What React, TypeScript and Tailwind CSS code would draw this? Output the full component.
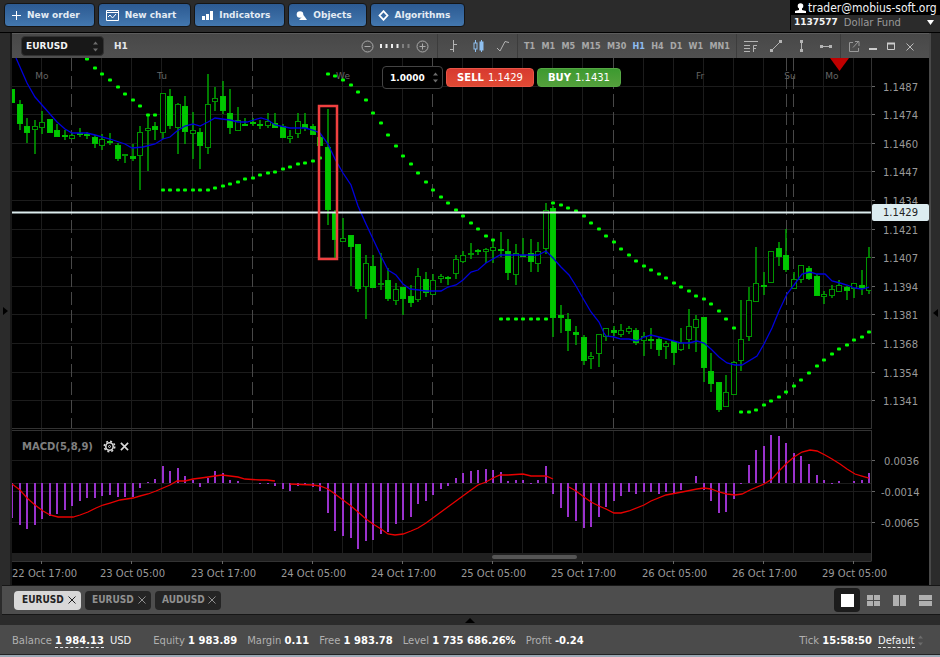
import type { ReactNode } from "react";

// [high, body top, body bottom, low, filled]
type Candle = [number, number, number, number, 0 | 1];

const CANDLES: Candle[] = [
  [89, 89, 103, 103, 1], [100, 104, 124, 130, 1], [118, 126, 133, 143, 1], [120, 126, 130, 154, 0], [111, 122, 128, 134, 0],
  [119, 119, 133, 133, 1], [124, 130, 137, 137, 1], [130, 135, 137, 140, 1], [133, 135, 139, 139, 0], [128, 133, 134, 137, 1],
  [132, 134, 136, 139, 1], [135, 137, 144, 148, 1], [134, 139, 146, 150, 0], [133, 141, 143, 145, 1], [143, 145, 159, 161, 1],
  [154, 154, 156, 163, 0], [144, 156, 159, 161, 1], [126, 132, 156, 190, 0], [115, 128, 131, 171, 0], [122, 126, 130, 140, 1],
  [93, 93, 133, 139, 0], [89, 96, 126, 129, 1], [103, 104, 128, 154, 0], [96, 106, 132, 144, 1], [112, 130, 134, 159, 0],
  [128, 132, 146, 169, 1], [74, 104, 148, 154, 0], [87, 98, 102, 111, 0], [81, 96, 111, 114, 1], [89, 113, 128, 134, 1],
  [107, 120, 131, 131, 0], [118, 124, 126, 126, 1], [118, 122, 124, 126, 1], [120, 124, 126, 129, 1], [113, 121, 126, 128, 0],
  [113, 123, 128, 128, 1], [124, 126, 138, 138, 1], [130, 136, 139, 143, 0], [113, 121, 134, 138, 0], [113, 124, 128, 131, 1],
  [124, 126, 135, 135, 1], [133, 137, 146, 146, 1], [109, 147, 210, 225, 1], [210, 212, 240, 259, 1], [218, 238, 242, 242, 0],
  [235, 235, 247, 286, 1], [244, 244, 289, 292, 1], [255, 263, 287, 319, 0], [255, 266, 288, 288, 1], [253, 283, 285, 290, 0],
  [268, 280, 299, 301, 1], [283, 289, 301, 305, 0], [287, 287, 299, 315, 1], [285, 296, 303, 307, 1], [268, 276, 300, 302, 0],
  [272, 279, 293, 297, 1], [274, 280, 295, 295, 0], [274, 276, 279, 283, 0], [276, 277, 279, 285, 1], [255, 259, 274, 279, 0],
  [251, 255, 262, 263, 0], [243, 253, 255, 259, 0], [249, 250, 252, 255, 1], [248, 249, 252, 263, 0], [241, 247, 251, 263, 0],
  [232, 249, 250, 257, 1], [239, 251, 273, 280, 1], [244, 253, 275, 285, 0], [238, 255, 257, 257, 1], [239, 253, 262, 272, 1],
  [242, 251, 264, 272, 0], [203, 210, 249, 254, 0], [206, 208, 318, 337, 1], [305, 315, 318, 333, 1], [313, 319, 331, 351, 1],
  [326, 332, 335, 345, 1], [335, 337, 361, 365, 1], [352, 356, 359, 369, 0], [334, 334, 354, 367, 0], [328, 328, 337, 341, 0],
  [326, 330, 333, 336, 1], [324, 330, 335, 337, 0], [326, 328, 332, 334, 0], [328, 330, 343, 345, 1], [332, 336, 341, 356, 0],
  [328, 339, 341, 349, 1], [337, 339, 350, 356, 1], [341, 343, 347, 359, 0], [341, 341, 353, 365, 1], [328, 343, 350, 351, 0],
  [309, 326, 340, 349, 0], [315, 319, 328, 352, 0], [317, 317, 368, 382, 1], [353, 371, 384, 392, 1], [382, 382, 410, 412, 1],
  [375, 392, 407, 407, 0], [361, 362, 395, 395, 0], [300, 339, 361, 371, 0], [287, 300, 337, 341, 0], [247, 283, 302, 302, 0],
  [272, 285, 287, 295, 1], [251, 251, 283, 283, 0], [242, 248, 257, 266, 1], [229, 255, 270, 272, 1], [272, 279, 289, 289, 0],
  [265, 265, 280, 283, 0], [266, 268, 279, 280, 1], [274, 276, 296, 296, 1], [291, 294, 297, 304, 0], [285, 289, 296, 298, 0],
  [280, 285, 292, 292, 0], [286, 287, 291, 300, 1], [283, 283, 289, 298, 0], [270, 285, 288, 295, 1], [247, 257, 291, 294, 0],
];

const SAR: { from: number; ys: number[] }[] = [
  { from: 10, ys: [59, 68, 74, 80, 87, 94, 100, 106, 115, 115] },
  { from: 20, ys: [190, 190, 190, 190, 190, 190, 190, 188, 186, 184, 182, 179, 178, 175, 173, 172, 169, 167, 164, 163, 161, 158] },
  { from: 42, ys: [74, 76, 80, 85, 92, 100, 113, 123, 135, 146, 156, 164, 173, 182, 190, 197, 203, 210, 216, 223, 229, 236, 240] },
  { from: 65, ys: [319, 319, 319, 319, 319, 319, 319] },
  { from: 72, ys: [203, 205, 208, 211, 216, 223, 229, 236, 242, 249, 255, 261, 266, 270, 274, 278, 283, 287, 291, 296, 299, 304, 311, 319, 328] },
  { from: 97, ys: [412, 412, 410, 405, 401, 397, 392, 386, 380, 373, 366, 360, 354, 349, 345, 340, 337, 332] },
];

const MACD = [
  518, 525, 529, 525, 519, 516, 514, 510, 506, 501, 498, 498, 496, 495, 497, 497, 497, 488, 482, 479, 466, 471, 468, 476, 480,
  487, 478, 471, 473, 480, 481, 483, 483, 484, 484, 486, 489, 491, 486, 485, 487, 491, 513, 531, 536, 538, 549, 541, 540, 534,
  532, 524, 520, 517, 504, 501, 495, 489, 486, 478, 473, 471, 470, 469, 470, 472, 481, 480, 480, 484, 480, 466, 494, 508, 517,
  521, 528, 527, 517, 507, 501, 496, 492, 494, 492, 492, 494, 492, 494, 490, 483, 476, 490, 501, 513, 512, 499, 484, 465, 450,
  446, 435, 436, 443, 453, 456, 464, 475, 480, 484, 481, 483, 481, 480, 473,
];

const MA_LINE =
  "16,58 20,67 27,83 35,97 42,105 57,122 65,129 72,133 87,133 95,135 110,139 125,144 132,148 143,147 155,144 163,139 170,137 177,131 185,126 193,124 200,126 208,122 215,118 222,119 230,120 238,122 247,122 254,120 261,118 268,120 275,125 290,128 305,128 313,130 320,133 328,144 335,159 343,173 351,185 358,206 366,224 373,239 381,256 388,270 396,275 403,284 410,289 419,290 426,291 441,291 448,287 456,285 463,280 471,272 478,270 486,263 500,255 538,255 546,251 553,258 561,267 569,275 576,286 584,300 591,312 599,322 604,333 606,336 614,337 621,339 629,339 637,341 644,337 651,335 659,337 674,341 681,343 689,343 697,341 704,343 711,349 719,357 727,363 735,365 742,365 757,356 764,344 772,328 779,311 787,294 794,285 802,274 810,272 817,274 825,274 832,281 840,283 847,285 855,288 862,289 869,287";

const SIGNAL_LINES = [
  "12,484 20,490 27,498 35,505 43,511 50,515 58,517 65,517 73,517 80,515 88,512 96,508 103,505 110,503 120,500 133,498 140,496 148,494 156,491 163,488 170,485 177,481 185,481 193,479 201,478 208,477 215,476 222,475 230,476 238,477 245,479 260,480 267,480 275,481",
  "290,484 313,485 320,486 328,489 335,494 343,500 351,506 358,512 366,519 373,524 381,529 388,534 395,535 403,534 411,531 418,528 426,523 441,512 456,501 471,490 478,485 486,482 493,478 500,475 508,475 523,474 531,476 546,476 553,479",
  "569,487 576,491 584,497 591,502 599,506 606,509 614,513 621,513 629,511 644,505 651,501 666,495 682,492 697,489 704,488 711,489 719,492 727,494 735,495 742,494 750,490 764,484 772,479 779,471 787,463 794,457 802,452 810,450 817,451 825,455 832,459 840,464 847,469 855,474 862,476 869,478",
];

const PRICES = ["1.1487", "1.1474", "1.1460", "1.1447", "1.1434", "1.1421", "1.1407", "1.1394", "1.1381", "1.1368", "1.1354", "1.1341"];

const MACD_LEVELS = [
  { y: 460.5, label: "0.0036", x: 884 },
  { y: 491.5, label: "-0.0014", x: 881 },
  { y: 522.5, label: "-0.0065", x: 881 },
];

const TIMES = [
  "22 Oct 17:00", "23 Oct 05:00", "23 Oct 17:00", "24 Oct 05:00", "24 Oct 17:00",
  "25 Oct 05:00", "25 Oct 17:00", "26 Oct 05:00", "26 Oct 17:00", "29 Oct 05:00",
];

const DAYS = [
  { x: 42, label: "Mo" },
  { x: 162, label: "Tu" },
  { x: 343, label: "We" },
  { x: 700, label: "Fr" },
  { x: 790, label: "Su" },
  { x: 832, label: "Mo" },
];

const TIMEFRAMES = ["T1", "M1", "M5", "M15", "M30", "H1", "H4", "D1", "W1", "MN1"];

const STATUS = [
  { label: "Equity", value: "1 983.89" },
  { label: "Margin", value: "0.11" },
  { label: "Free", value: "1 983.78" },
  { label: "Level", value: "1 735 686.26%" },
  { label: "Profit", value: "-0.24" },
];

const barX = (i: number) => Math.round(12.3 + i * 7.516);
const gridX = (k: number) => Math.floor(41.7 + k * 30.07) + 0.5;
const gridY = (k: number) => Math.floor(86 + k * 28.6) + 0.5;

function Chart() {
  const columns = Array.from({ length: 28 }, (_, k) => k);
  const dashed = [1, 7, 13, 19, 25];

  return (
    <svg viewBox="12 58 917 527" className="block h-auto w-full bg-black" role="img" aria-label="EURUSD H1 chart">
      <defs>
        <clipPath id="plot">
          <rect x="12" y="58" width="860" height="495" />
        </clipPath>
      </defs>

      <g stroke="#1c1c1c">
        {columns.filter((k) => !dashed.includes(k)).map((k) => (
          <path key={k} d={`M${gridX(k)} 58V553`} />
        ))}
        {dashed.map((k) => (
          <path key={k} d={`M${gridX(k)} 431V553`} />
        ))}
        {PRICES.map((p, k) => (
          <path key={p} d={`M12 ${gridY(k)}H872`} />
        ))}
        {MACD_LEVELS.map((l) => (
          <path key={l.label} d={`M12 ${l.y}H872`} />
        ))}
        <path d="M12 483.5H872" />
      </g>
      <g stroke="#484848" strokeDasharray="13 5">
        {dashed.map((k) => (
          <path key={k} d={`M${gridX(k)} 58V428`} />
        ))}
        <path d="M786.5 58V428" />
      </g>

      <g fontSize="9" fill="#666" textAnchor="middle">
        {DAYS.map((d) => (
          <text key={d.x} x={d.x} y="79">
            {d.label}
          </text>
        ))}
      </g>
      <path d="M830 58h19l-9.5 13z" fill="#c00000" />

      <g clipPath="url(#plot)">
        {CANDLES.map(([high, top, bottom, low, filled], i) => {
          const x = barX(i);
          return (
            <g key={i}>
              <path d={`M${x} ${high}V${top}M${x} ${bottom}V${low}`} stroke="#00b000" strokeWidth="1.4" />
              <rect
                x={x - 2.5}
                y={top + 0.5}
                width="5"
                height={Math.max(1, bottom - top - 1)}
                fill={filled ? "#00c800" : "#000"}
                stroke={filled ? "#00c000" : "#009400"}
              />
            </g>
          );
        })}
        <polyline points={MA_LINE} fill="none" stroke="#0000dc" strokeWidth="1.3" />
        {SAR.map((run) =>
          run.ys.map((y, n) => <rect key={run.from + n} x={barX(run.from + n) - 2} y={y - 1.5} width="4" height="3" rx="1" fill="#00ff00" />)
        )}
        {MACD.map((y, i) =>
          y === 483 ? null : <rect key={i} x={barX(i) - 1} y={Math.min(y, 483)} width="2" height={Math.abs(y - 483)} fill="#9a32cd" />
        )}
        {SIGNAL_LINES.map((points) => (
          <polyline key={points} points={points} fill="none" stroke="#e80000" strokeWidth="1.3" />
        ))}
      </g>

      <path d="M12 212.5H872" stroke="#dcecee" strokeWidth="2" />
      <rect x="319" y="106" width="18" height="153" fill="none" stroke="#f04040" strokeWidth="2.5" />

      <path d="M12 428.5H872M12 430.5H872" stroke="#333" />
      <rect x="12" y="553" width="860" height="8" fill="#202020" />
      <rect x="492" y="555" width="85" height="4" rx="2" fill="#555" />
      <path d="M12 561.5H871.5M871.5 58V428M871.5 431V561" stroke="#333" fill="none" />

      <g fontSize="10" fill="#999">
        {PRICES.map((p, k) => (
          <g key={p}>
            <path d={`M872 ${gridY(k)}h3`} stroke="#666" />
            <text x="883" y={gridY(k) + 4}>
              {p}
            </text>
          </g>
        ))}
        {MACD_LEVELS.map((l) => (
          <g key={l.label}>
            <path d={`M872 ${l.y}h3`} stroke="#666" />
            <text x={l.x} y={l.y + 4}>
              {l.label}
            </text>
          </g>
        ))}
        {TIMES.map((t, k) => (
          <g key={t}>
            <path d={`M${gridX(k * 3)} 561v3`} stroke="#666" />
            {/* the first label starts at the plot edge so it is not cut off */}
            <text x={k === 0 ? 12 : gridX(k * 3) + 1} y="577" textAnchor={k === 0 ? "start" : "middle"}>
              {t}
            </text>
          </g>
        ))}
      </g>

      <rect x="872" y="204" width="57" height="17" rx="2" fill="#dcecf0" />
      <text x="883" y="216" fontSize="10" fill="#222">
        1.1429
      </text>
    </svg>
  );
}

function Spin() {
  return (
    <svg width="7" height="11" viewBox="0 0 7 11" fill="#6c6c6c" className="pointer-events-none shrink-0" aria-hidden>
      <path d="M3.5 0.5L6 3.5H1zM3.5 10.5L1 7.5h5z" />
    </svg>
  );
}

function TopButton({ icon, children }: { icon: ReactNode; children: ReactNode }) {
  return (
    <button className="flex h-6 items-center gap-1.5 rounded-sm border border-[#151515] bg-gradient-to-b from-[#2c5a92] to-[#4377ae] pl-[7px] pr-3.5 text-[9px] font-bold text-[#e4ecf4]">
      {icon}
      {children}
    </button>
  );
}

function ToolIcon({ label, children }: { label: string; children: ReactNode }) {
  return (
    <button aria-label={label} className="flex h-4 flex-1 items-center justify-center text-[#b4b4b4]">
      <svg width="16" height="16" viewBox="0 0 16 16" fill="none" stroke="currentColor">
        {children}
      </svg>
    </button>
  );
}

function ChartToolbar() {
  return (
    <div className="flex h-[25px] items-center border-t border-[#5c5c5c] bg-gradient-to-b from-[#484848] to-[#505050]">
      <label className="ml-[9px] flex h-5 w-[83px] items-center justify-between rounded border border-[#333] bg-[#181818] px-1">
        <select aria-label="Symbol" className="w-full appearance-none bg-transparent text-[9px] font-bold text-gray-100 outline-none">
          <option>EURUSD</option>
        </select>
        <Spin />
      </label>
      <span className="ml-2.5 text-[9px] font-bold text-gray-200">H1</span>

      <div className="ml-auto mr-2 flex items-center gap-1.5">
        <button aria-label="Zoom out">
          <svg width="13" height="13" viewBox="0 0 13 13" fill="none" stroke="#aaa">
            <circle cx="6.5" cy="6.5" r="5.5" />
            <path d="M3.5 6.5h6" />
          </svg>
        </button>
        <span className="relative block h-3 w-[30px]">
          <svg width="30" height="12" viewBox="0 0 30 12" aria-hidden>
            {[0, 1, 2, 3, 4, 5].map((n) => (
              <rect key={n} x={n * 5.5} y="4" width="2" height="4" fill={n < 4 ? "#eee" : "#808080"} />
            ))}
          </svg>
          <input type="range" aria-label="Zoom" min={0} max={5} defaultValue={3} className="absolute inset-0 h-3 w-full opacity-0" />
        </span>
        <button aria-label="Zoom in">
          <svg width="13" height="13" viewBox="0 0 13 13" fill="none" stroke="#aaa">
            <circle cx="6.5" cy="6.5" r="5.5" />
            <path d="M3.5 6.5h6M6.5 3.5v6" />
          </svg>
        </button>
      </div>

      <div className="flex h-full w-20 items-center border-l border-[#3c3c3c] px-0.5">
        <ToolIcon label="Bars">
          <path d="M8.5 2v12M5 11.5h3.5M8.5 6.5H12" />
        </ToolIcon>
        <ToolIcon label="Candles">
          <path d="M5.5 2v12M11.5 2v12" stroke="#8fc0f0" />
          <rect x="4" y="5" width="3" height="6" fill="#4a4a4a" stroke="#8fc0f0" />
          <rect x="10" y="4" width="3" height="8" fill="#8fc0f0" stroke="#8fc0f0" />
        </ToolIcon>
        <ToolIcon label="Line">
          <path d="M2 10l3 3 5-9.5 4 1" />
        </ToolIcon>
      </div>

      <div className="flex h-full w-[219px] items-center justify-between border-l border-[#3c3c3c] px-1.5 font-['DejaVu_Sans_Condensed','DejaVu_Sans',sans-serif] text-[9px] font-bold text-[#a8a8a8]">
        {TIMEFRAMES.map((t) => (
          <button key={t} className={t === "H1" ? "text-[#8fbcf0]" : ""}>
            {t}
          </button>
        ))}
      </div>

      <div className="flex h-full w-[104px] items-center border-l border-[#3c3c3c] px-0.5">
        <ToolIcon label="Fibonacci">
          <path d="M1 3.5h14M1 7.5h6M1 10.5h6M1 13.5h6M10.5 14V7.5H14M10.5 10.5H13" />
        </ToolIcon>
        <ToolIcon label="Trend line">
          <path d="M3 13l9-9" />
          <path d="M2 11h3v3H2zM11 2h3v3h-3z" fill="currentColor" stroke="none" />
        </ToolIcon>
        <ToolIcon label="Vertical line">
          <path d="M8.5 4v9" />
          <path d="M7 2h3v3H7zM7 11h3v3H7z" fill="currentColor" stroke="none" />
        </ToolIcon>
        <ToolIcon label="Horizontal line">
          <path d="M3 8.5h10" />
          <path d="M2 7h3v3H2zM11 7h3v3h-3z" fill="currentColor" stroke="none" />
        </ToolIcon>
      </div>

      <div className="flex h-full w-[89px] items-center border-l border-[#3c3c3c] pl-1 pr-2.5">
        <ToolIcon label="Detach">
          <path d="M7 4.5H3.5v9h9V10M7 9.5l5.5-6M9 3.5h4V8" stroke="#999" />
        </ToolIcon>
        <ToolIcon label="Minimize">
          <path d="M4 11h8" stroke="#ccc" strokeWidth="2" />
        </ToolIcon>
        <ToolIcon label="Maximize">
          <path d="M4.5 5v6.5h7V5" stroke="#ccc" />
          <path d="M4 5.5h8" stroke="#ccc" strokeWidth="2" />
        </ToolIcon>
        <ToolIcon label="Close">
          <path d="M4.5 5.5l7 7M11.5 5.5l-7 7" stroke="#bbb" />
        </ToolIcon>
      </div>
    </div>
  );
}

function TradePanel() {
  return (
    <div className="absolute left-[370px] top-2 flex items-center gap-[3px] text-[10px] font-bold text-white">
      <label className="flex h-[23px] w-[61px] items-center justify-between rounded-sm border border-[#444] bg-black pl-[7px] pr-[3px]">
        <input aria-label="Volume" defaultValue="1.0000" className="w-[42px] bg-transparent text-[9px] font-bold outline-none" />
        <Spin />
      </label>
      <button className="flex h-[19px] w-[88px] items-center justify-center gap-1 rounded-sm border border-[#e85548] bg-gradient-to-b from-[#d83a30] to-[#e04a34]">
        SELL <span className="font-normal">1.1429</span>
      </button>
      <button className="flex h-[19px] w-[84px] items-center justify-center gap-1 rounded-sm border border-[#55a844] bg-gradient-to-b from-[#3c9a30] to-[#54a03c]">
        BUY <span className="font-normal">1.1431</span>
      </button>
    </div>
  );
}

function IndicatorLabel() {
  return (
    <div className="absolute left-[10px] top-[382px] flex items-center gap-1 text-[10px] font-bold text-[#808080]">
      <span className="mr-1.5">MACD(5,8,9)</span>
      <button aria-label="Indicator settings">
        <svg width="13" height="13" viewBox="0 0 13 13" fill="none" stroke="#d8d8d8">
          <circle cx="6.5" cy="6.5" r="3.7" strokeWidth="1.6" />
          <circle cx="6.5" cy="6.5" r="5.2" strokeWidth="1.6" strokeDasharray="2 2.08" />
          <circle cx="6.5" cy="6.5" r="1" />
        </svg>
      </button>
      <button aria-label="Remove indicator">
        <svg width="9" height="9" viewBox="0 0 10 10" fill="none" stroke="#d8d8d8" strokeWidth="1.8">
          <path d="M1 1l8 8M9 1L1 9" />
        </svg>
      </button>
    </div>
  );
}

function ChartTab({ name, active }: { name: string; active?: boolean }) {
  return (
    <div
      className={
        active
          ? "flex h-[19px] w-[67px] items-center justify-between rounded bg-[#d8d8d8] pl-2 pr-[5px] text-[#222]"
          : "flex h-[19px] w-[66px] items-center justify-between rounded bg-[#242424] pl-[7px] pr-[5px] text-[#909090]"
      }
    >
      <button className="font-['DejaVu_Sans_Condensed','DejaVu_Sans',sans-serif] text-[10px] font-bold">{name}</button>
      <button aria-label={`Close ${name}`}>
        <svg width="8" height="8" viewBox="0 0 8 8" fill="none" stroke="currentColor">
          <path d="M.5.5l7 7M7.5.5l-7 7" />
        </svg>
      </button>
    </div>
  );
}

function LayoutButton({ label, active, children }: { label: string; active?: boolean; children: ReactNode }) {
  return (
    <button
      aria-label={label}
      className={active ? "flex h-6 w-[26px] items-center justify-center rounded bg-[#1c1c1c] text-white" : "flex h-6 w-[26px] items-center justify-center text-[#b0b0b0]"}
    >
      <svg width="13" height="13" viewBox="0 0 13 13" fill="currentColor">
        {children}
      </svg>
    </button>
  );
}

export default function App() {
  return (
    <div className="bg-[#2b2b2b] font-['DejaVu_Sans',Verdana,sans-serif] text-[10px] leading-none">
      <header className="flex h-8 items-start justify-between">
        <nav className="flex gap-[3px] pl-1 pt-[3px]">
          <TopButton
            icon={
              <svg width="9" height="9" viewBox="0 0 9 9" stroke="#fff" fill="none">
                <path d="M4.5 0v9M0 4.5h9" />
              </svg>
            }
          >
            New order
          </TopButton>
          <TopButton
            icon={
              <svg width="13" height="11" viewBox="0 0 13 11" stroke="#fff" fill="none">
                <path d="M.5.5h12v10H.5zM1 2.5h11" />
                <path d="M2 7l2-2 2.5 3L10 4" />
              </svg>
            }
          >
            New chart
          </TopButton>
          <TopButton
            icon={
              <svg width="11" height="9" viewBox="0 0 11 9" fill="#fff">
                <path d="M0 5h3v4H0zM4 3h3v6H4zM8 0h3v9H8z" />
              </svg>
            }
          >
            Indicators
          </TopButton>
          <TopButton
            icon={
              <svg width="11" height="9" viewBox="0 0 11 9" fill="#fff">
                <circle cx="4" cy="3.5" r="3.3" />
                <path d="M7.5 4l3.5 5H3z" />
              </svg>
            }
          >
            Objects
          </TopButton>
          <TopButton
            icon={
              <svg width="11" height="11" viewBox="0 0 11 11" stroke="#fff" strokeWidth="1.8" fill="none">
                <path d="M5.5 1.2l4 4.3-4 4.3-4-4.3z" />
              </svg>
            }
          >
            Algorithms
          </TopButton>
        </nav>

        <div className="w-[150px] border-l border-black text-[10px]">
          <div className="flex h-[15px] items-center gap-0.5 whitespace-nowrap bg-black pl-1 text-gray-100">
            <svg width="11" height="10" viewBox="0 0 11 10" fill="#fff" aria-hidden>
              <circle cx="5.5" cy="3" r="2.8" />
              <path d="M4 5h3v2l4 1v2H0V8l4-1z" />
            </svg>
            <span className="font-['DejaVu_Sans_Condensed','DejaVu_Sans',sans-serif] text-[12px]">trader@mobius-soft.org</span>
          </div>
          <button className="flex h-[15px] w-full items-center gap-1.5 pl-[3px] pr-1.5 text-[10px]">
            <span className="text-[9px] font-bold text-gray-100">1137577</span>
            <span className="text-[#999]">Dollar Fund</span>
            <svg width="7" height="5" viewBox="0 0 7 5" fill="#fff" className="ml-auto" aria-hidden>
              <path d="M0 0h7L3.5 5z" />
            </svg>
          </button>
        </div>
      </header>

      <main className="flex border-t border-black">
        <button aria-label="Expand left panel" className="flex w-3 shrink-0 items-center justify-center border-r-2 border-[#181818] bg-[#2b2b2b] pt-1">
          <svg width="5" height="8" viewBox="0 0 5 8" fill="#000">
            <path d="M0 0l5 4-5 4z" />
          </svg>
        </button>
        <section className="min-w-0 flex-1">
          <ChartToolbar />
          <div className="relative">
            <Chart />
            <TradePanel />
            <IndicatorLabel />
          </div>
        </section>
        <button aria-label="Expand right panel" className="flex w-[11px] shrink-0 items-center justify-end border-l-2 border-[#484848] bg-[#2b2b2b] pr-0.5 pt-2">
          <svg width="5" height="8" viewBox="0 0 5 8" fill="#000">
            <path d="M5 0L0 4l5 4z" />
          </svg>
        </button>
      </main>

      <div className="ml-0.5 flex h-[30px] items-center justify-between border-y border-t-[#161616] border-b-[#161616] bg-[#4d4d4d] pl-3 pr-0.5">
        <div className="flex gap-1">
          <ChartTab name="EURUSD" active />
          <ChartTab name="EURUSD" />
          <ChartTab name="AUDUSD" />
        </div>
        <div className="flex">
          <LayoutButton label="Single chart" active>
            <path d="M0 0h13v13H0z" />
          </LayoutButton>
          <LayoutButton label="Four charts">
            <path d="M0 1h6v5H0zM7 1h6v5H7zM0 7h6v5H0zM7 7h6v5H7z" />
          </LayoutButton>
          <LayoutButton label="Two columns">
            <path d="M0 1h6v11H0zM7 1h6v11H7z" />
          </LayoutButton>
          <LayoutButton label="Two rows">
            <path d="M0 1h13v5H0zM0 7h13v5H0z" />
          </LayoutButton>
        </div>
      </div>

      <button aria-label="Expand bottom panel" className="flex h-2.5 w-full items-center justify-center bg-[#2b2b2b]">
        <svg width="10" height="5" viewBox="0 0 10 5" fill="#000">
          <path d="M5 0l5 5H0z" />
        </svg>
      </button>

      <footer className="flex h-[30px] items-center border-b border-[#222] bg-[#4b4b4b] pl-3 pr-4 pt-0.5 text-[#b0b0b0]">
        <span>Balance</span>
        <b className="ml-[3px] border-b border-dashed border-gray-200 pb-px pt-0.5 text-white">1 984.13</b>
        <span className="ml-1.5 text-gray-100">USD</span>
        <div className="ml-[22px] flex gap-2.5">
          {STATUS.map((s) => (
            <span key={s.label}>
              {s.label} <b className="text-white">{s.value}</b>
            </span>
          ))}
        </div>
        <span className="ml-auto">
          Tick <b className="text-white">15:58:50</b>
        </span>
        <label className="ml-1.5 flex items-center gap-0.5">
          <select aria-label="Profile" className="appearance-none border-b border-dashed border-gray-200 bg-transparent pb-px pt-0.5 text-[10px] text-gray-100 outline-none">
            <option>Default</option>
          </select>
          <Spin />
        </label>
      </footer>
      <div className="h-0.5 bg-[#9aa8b4]" />
    </div>
  );
}
